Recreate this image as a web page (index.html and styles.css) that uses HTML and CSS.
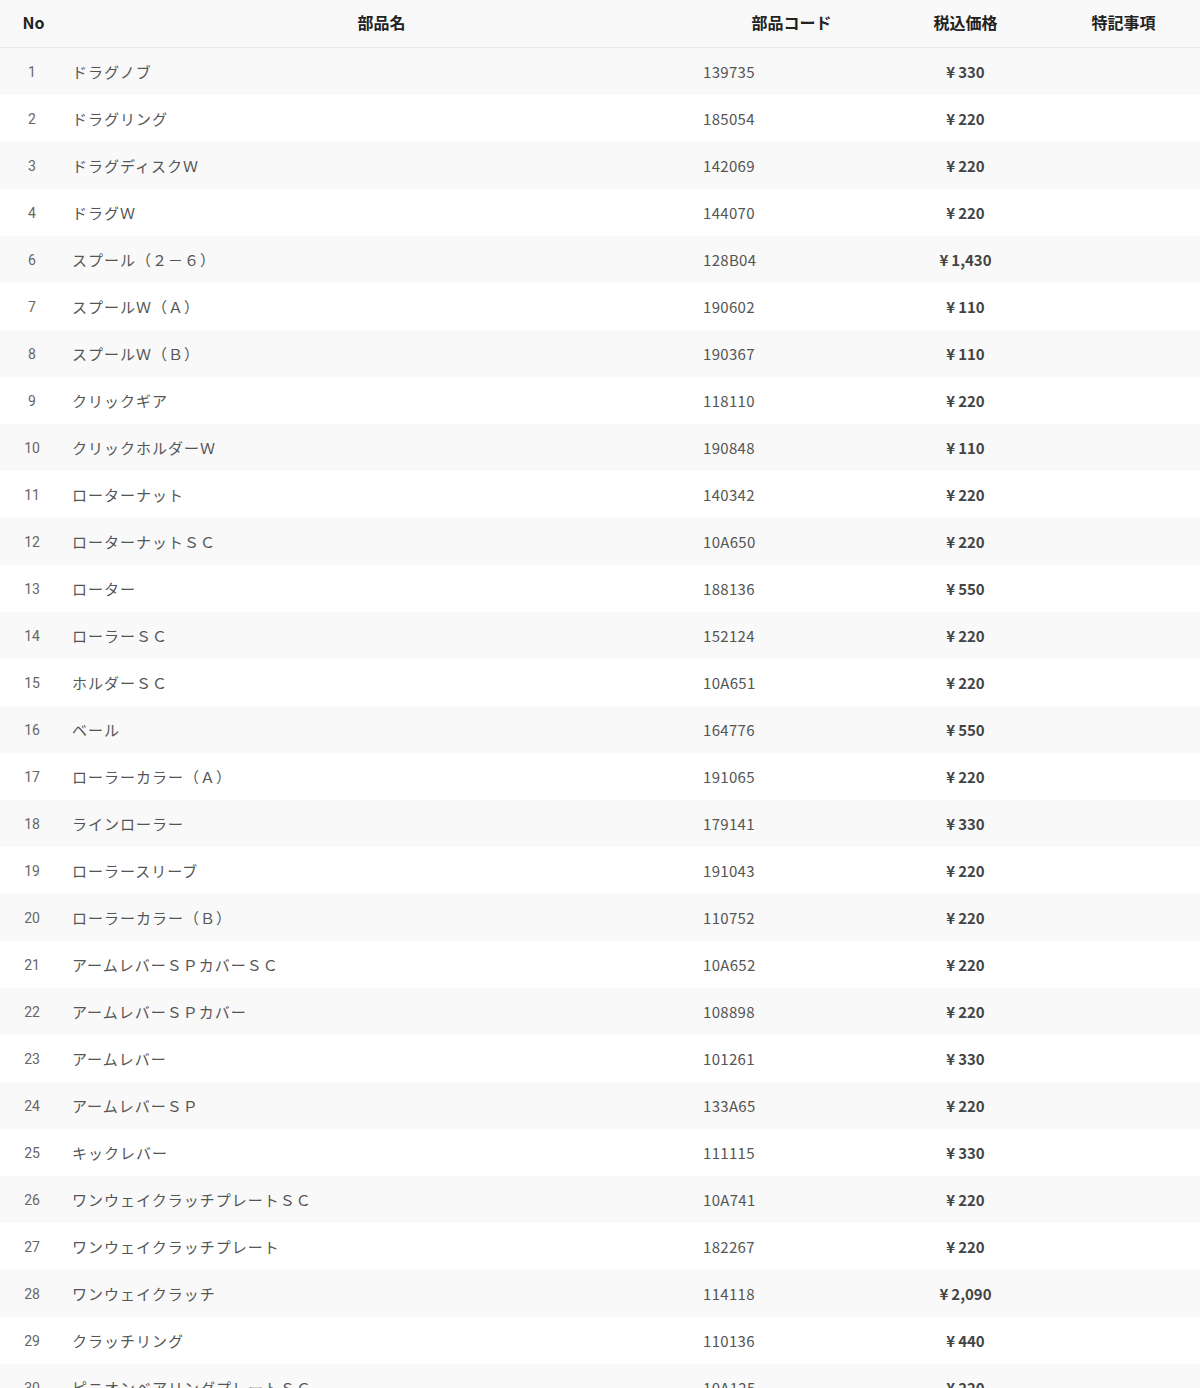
FILE: index.html
```html
<!DOCTYPE html>
<html lang="ja">
<head>
<meta charset="utf-8">
<link rel="stylesheet" href="styles.css">
</head>
<body>
<table class="parts">
  <colgroup>
    <col class="c-no"><col class="c-name"><col class="c-code"><col class="c-price"><col class="c-note">
  </colgroup>
  <thead>
    <tr><th class="h-no">No</th><th>部品名</th><th>部品コード</th><th>税込価格</th><th>特記事項</th></tr>
  </thead>
  <tbody>
    <tr><td class="no">1</td><td class="name">ドラグノブ</td><td class="code">139735</td><td class="price"><span class="yen">¥</span>330</td><td></td></tr>
    <tr><td class="no">2</td><td class="name">ドラグリング</td><td class="code">185054</td><td class="price"><span class="yen">¥</span>220</td><td></td></tr>
    <tr><td class="no">3</td><td class="name">ドラグディスクＷ</td><td class="code">142069</td><td class="price"><span class="yen">¥</span>220</td><td></td></tr>
    <tr><td class="no">4</td><td class="name">ドラグＷ</td><td class="code">144070</td><td class="price"><span class="yen">¥</span>220</td><td></td></tr>
    <tr><td class="no">6</td><td class="name">スプール（２－６）</td><td class="code">128B04</td><td class="price"><span class="yen">¥</span>1,430</td><td></td></tr>
    <tr><td class="no">7</td><td class="name">スプールＷ（Ａ）</td><td class="code">190602</td><td class="price"><span class="yen">¥</span>110</td><td></td></tr>
    <tr><td class="no">8</td><td class="name">スプールＷ（Ｂ）</td><td class="code">190367</td><td class="price"><span class="yen">¥</span>110</td><td></td></tr>
    <tr><td class="no">9</td><td class="name">クリックギア</td><td class="code">118110</td><td class="price"><span class="yen">¥</span>220</td><td></td></tr>
    <tr><td class="no">10</td><td class="name">クリックホルダーＷ</td><td class="code">190848</td><td class="price"><span class="yen">¥</span>110</td><td></td></tr>
    <tr><td class="no">11</td><td class="name">ローターナット</td><td class="code">140342</td><td class="price"><span class="yen">¥</span>220</td><td></td></tr>
    <tr><td class="no">12</td><td class="name">ローターナットＳＣ</td><td class="code">10A650</td><td class="price"><span class="yen">¥</span>220</td><td></td></tr>
    <tr><td class="no">13</td><td class="name">ローター</td><td class="code">188136</td><td class="price"><span class="yen">¥</span>550</td><td></td></tr>
    <tr><td class="no">14</td><td class="name">ローラーＳＣ</td><td class="code">152124</td><td class="price"><span class="yen">¥</span>220</td><td></td></tr>
    <tr><td class="no">15</td><td class="name">ホルダーＳＣ</td><td class="code">10A651</td><td class="price"><span class="yen">¥</span>220</td><td></td></tr>
    <tr><td class="no">16</td><td class="name">ベール</td><td class="code">164776</td><td class="price"><span class="yen">¥</span>550</td><td></td></tr>
    <tr><td class="no">17</td><td class="name">ローラーカラー（Ａ）</td><td class="code">191065</td><td class="price"><span class="yen">¥</span>220</td><td></td></tr>
    <tr><td class="no">18</td><td class="name">ラインローラー</td><td class="code">179141</td><td class="price"><span class="yen">¥</span>330</td><td></td></tr>
    <tr><td class="no">19</td><td class="name">ローラースリーブ</td><td class="code">191043</td><td class="price"><span class="yen">¥</span>220</td><td></td></tr>
    <tr><td class="no">20</td><td class="name">ローラーカラー（Ｂ）</td><td class="code">110752</td><td class="price"><span class="yen">¥</span>220</td><td></td></tr>
    <tr><td class="no">21</td><td class="name">アームレバーＳＰカバーＳＣ</td><td class="code">10A652</td><td class="price"><span class="yen">¥</span>220</td><td></td></tr>
    <tr><td class="no">22</td><td class="name">アームレバーＳＰカバー</td><td class="code">108898</td><td class="price"><span class="yen">¥</span>220</td><td></td></tr>
    <tr><td class="no">23</td><td class="name">アームレバー</td><td class="code">101261</td><td class="price"><span class="yen">¥</span>330</td><td></td></tr>
    <tr><td class="no">24</td><td class="name">アームレバーＳＰ</td><td class="code">133A65</td><td class="price"><span class="yen">¥</span>220</td><td></td></tr>
    <tr><td class="no">25</td><td class="name">キックレバー</td><td class="code">111115</td><td class="price"><span class="yen">¥</span>330</td><td></td></tr>
    <tr><td class="no">26</td><td class="name">ワンウェイクラッチプレートＳＣ</td><td class="code">10A741</td><td class="price"><span class="yen">¥</span>220</td><td></td></tr>
    <tr><td class="no">27</td><td class="name">ワンウェイクラッチプレート</td><td class="code">182267</td><td class="price"><span class="yen">¥</span>220</td><td></td></tr>
    <tr><td class="no">28</td><td class="name">ワンウェイクラッチ</td><td class="code">114118</td><td class="price"><span class="yen">¥</span>2,090</td><td></td></tr>
    <tr><td class="no">29</td><td class="name">クラッチリング</td><td class="code">110136</td><td class="price"><span class="yen">¥</span>440</td><td></td></tr>
    <tr><td class="no">30</td><td class="name">ピニオンベアリングプレートＳＣ</td><td class="code">10A125</td><td class="price"><span class="yen">¥</span>220</td><td></td></tr>
  </tbody>
</table>
</body>
</html>
```
FILE: styles.css
```css
html, body {
  margin: 0;
  padding: 0;
  background: #ffffff;
}
body {
  font-family: "Noto Sans CJK JP", "Noto Sans", sans-serif;
  color: #555555;
}
.parts {
  width: 1200px;
  border-collapse: collapse;
  table-layout: fixed;
}
.c-no { width: 64px; }
.c-name { width: 635px; }
.c-code { width: 185px; }
.c-price { width: 163px; }
.c-note { width: 153px; }
.parts thead th {
  height: 44px;
  padding: 0 0 3px 0;
  background: #f9f9f9;
  border-bottom: 1px solid #e8e8e8;
  font-family: "Noto Sans CJK JP", sans-serif;
  font-weight: 700;
  font-size: 16px;
  line-height: 1;
  color: #222222;
  text-align: center;
  vertical-align: middle;
}
.parts thead th.h-no {
  padding-left: 3px;
}
.parts tbody td {
  height: 47px;
  padding: 0;
  vertical-align: middle;
  font-size: 15px;
  line-height: 1;
}
.parts tbody tr:nth-child(odd) td {
  background: #f9f9f9;
}
.parts td.no {
  text-align: center;
  font-family: Roboto, "Noto Sans CJK JP", sans-serif;
  font-size: 14px;
  color: #666666;
}
.parts td.name {
  padding-left: 8px;
  letter-spacing: 1px;
  color: #555555;
}
.parts td.code {
  padding-left: 4px;
  letter-spacing: 0.3px;
  color: #555555;
}
.parts td.price {
  text-align: center;
  font-weight: 700;
  color: #444444;
}
.parts td.price .yen {
  margin-right: 3px;
}
```
